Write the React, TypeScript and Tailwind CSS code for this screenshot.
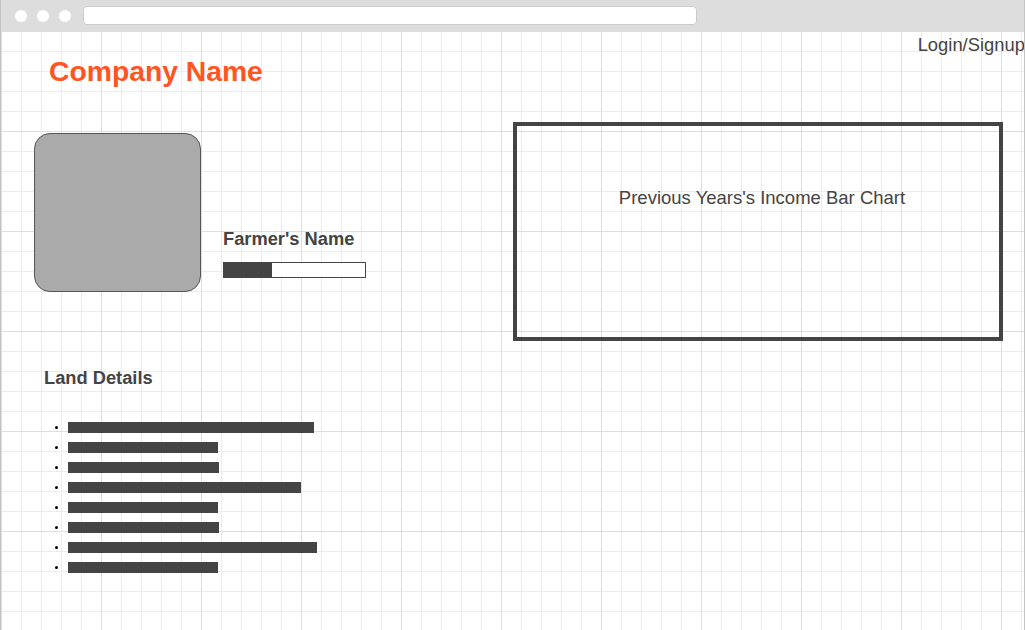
const landRows = [246, 150, 151, 233, 150, 151, 249, 150];

function BrowserChrome() {
	return (
		<div className="h-[31px] shrink-0 bg-[#dddddd] flex items-center">
			<div className="flex gap-[10px] ml-[14px]">
				<span className="w-[12px] h-[12px] rounded-full bg-white" />
				<span className="w-[12px] h-[12px] rounded-full bg-white" />
				<span className="w-[12px] h-[12px] rounded-full bg-white" />
			</div>
			<div className="ml-[12px] w-[614px] h-[19px] rounded-[4px] bg-white border border-[#cccccc]" />
		</div>
	);
}

function App() {
	return (
		<div className="w-[1025px] h-[630px] flex flex-col overflow-hidden border-x border-[#c2c2c2] bg-white font-['Liberation_Sans',Arial,sans-serif] text-[#444444]">
			<BrowserChrome />

			<div className="flex-1 bg-[linear-gradient(to_right,#dedede_1px,transparent_1px),linear-gradient(to_bottom,#dedede_1px,transparent_1px),linear-gradient(to_right,#ececec_1px,transparent_1px),linear-gradient(to_bottom,#ececec_1px,transparent_1px)] bg-size-[100px_100px,100px_100px,20px_20px,20px_20px]">
				{/* header */}
				<div className="flex items-start justify-between">
					<h1 className="ml-[48px] mt-[24px] text-[28.3px] leading-[32px] font-bold text-[#ff5522]">
						Company Name
					</h1>
					<span className="mt-[4px] mr-[-1px] text-[18.4px] leading-[20px] whitespace-nowrap">
						Login/Signup
					</span>
				</div>

				{/* farmer + chart */}
				<div className="flex items-start mt-[35px]">
					<div className="ml-[33px] mt-[11px] w-[167px] h-[159px] rounded-[16px] bg-[#aaaaaa] border border-[#555555]" />
					<div className="ml-[22px] mt-[107px] flex flex-col">
						<h2 className="text-[18.3px] leading-[20px] font-bold">Farmer's Name</h2>
						<div className="mt-[13px] w-[143px] h-[16px] border border-[#444444] bg-white">
							<div className="w-[48px] h-full bg-[#444444]" />
						</div>
					</div>
					<div className="ml-auto mr-[21px] w-[490px] h-[219px] border-4 border-[#444444] flex justify-center pt-[62px] pl-[8px]">
						<p className="text-[18.5px] leading-[20px]">Previous Years's Income Bar Chart</p>
					</div>
				</div>

				{/* land details */}
				<h2 className="ml-[43px] mt-[27px] text-[18.3px] leading-[20px] font-bold">Land Details</h2>
				<ul className="mt-[29px]">
					{landRows.map((w, i) => (
						<li key={i} className="h-[20px] flex items-center ml-[54px]">
							<span className="w-[3px] h-[3px] rounded-full bg-black" />
							<span className="ml-[10px] h-[11px] bg-[#444444]" style={{ width: w }} />
						</li>
					))}
				</ul>
			</div>
		</div>
	);
}

export default App;
